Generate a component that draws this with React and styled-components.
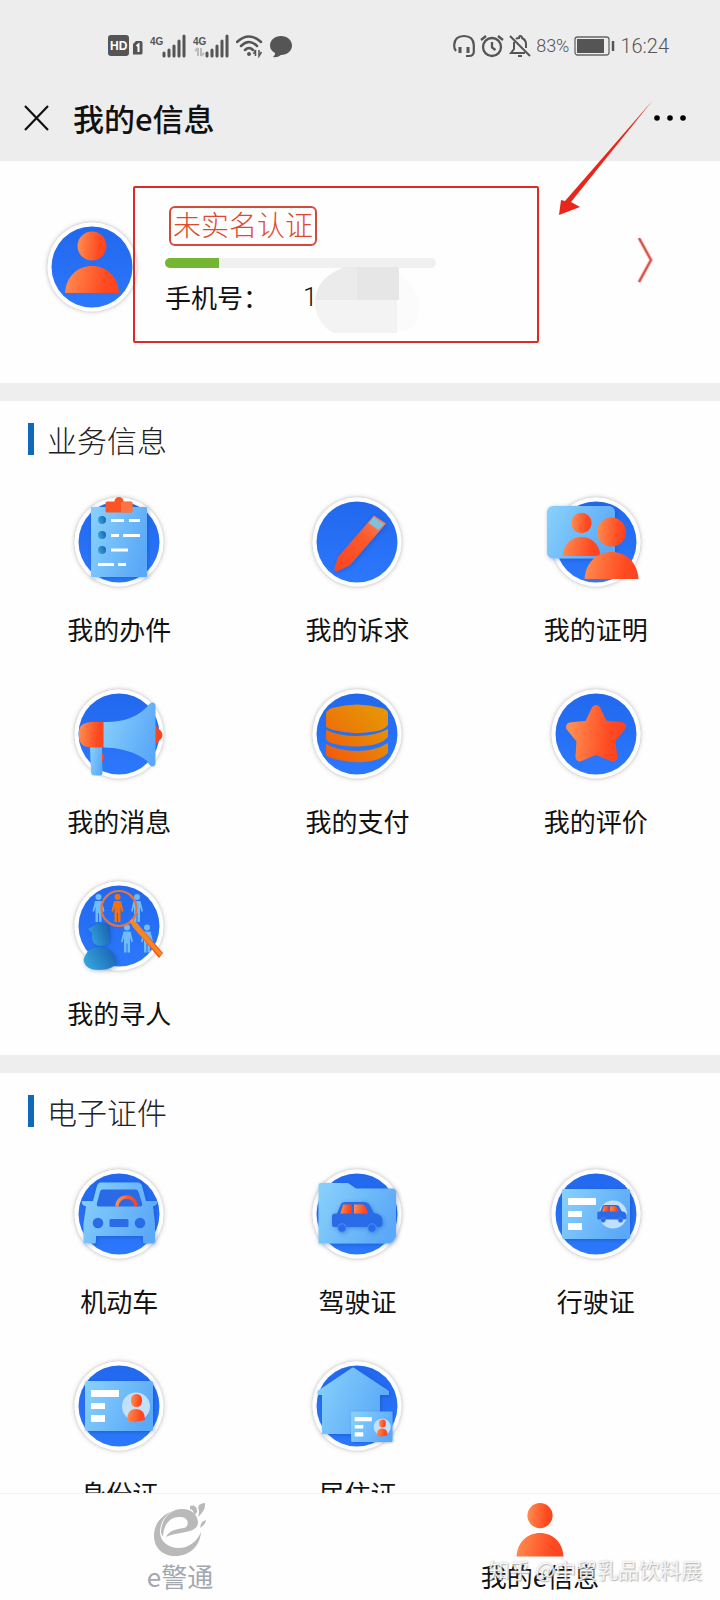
import styled, { createGlobalStyle } from 'styled-components'

const GlobalStyle = createGlobalStyle`
  * {
    box-sizing: border-box;
  }

  body {
    margin: 0;
    background: #fefefe;
    color: #111;
    font-family: "Noto Sans CJK SC", "Noto Sans", sans-serif;
    font-weight: 300;
  }
`

const Page = styled.div`
  position: relative;
  display: flex;
  flex-direction: column;
  height: 100vh;
  overflow: hidden;
`

const StatusBar = styled.div`
  display: flex;
  justify-content: space-between;
  padding: 34px 51px 17px 108px;
  background: #ededed;
  color: #555;
`

const StatusGroup = styled.div`
  display: flex;
  align-items: center;
  gap: ${(props) => props.$gap}px;
  height: 24px;
`

const StatusText = styled.span`
  font-family: "Roboto", sans-serif;
  font-size: ${(props) => props.$size}px;
  line-height: 24px;
`

const Header = styled.header`
  display: flex;
  align-items: center;
  gap: 24px;
  height: 86px;
  padding: 0 33px 0 24px;
  background: #ededed;
`

const IconButton = styled.button`
  display: flex;
  padding: 0;
  border: 0;
  background: none;
  color: inherit;
  cursor: pointer;
`

const Title = styled.h1`
  flex: 1;
  margin: 0;
  font-size: 31px;
  font-weight: 500;
  line-height: 32px;
`

const Content = styled.main`
  flex: 1;
  min-height: 0;
  overflow-y: auto;
  scrollbar-width: none;
`

const Profile = styled.section`
  display: flex;
  align-items: center;
  padding: 25px 60px 40px 44px;
`

const AvatarFrame = styled.div`
  padding-top: 5px;
`

const ProfileBox = styled.div`
  position: relative;
  flex: 0 1 406px;
  margin: 0 auto 0 -7px;
  padding: 18px 101px 26px 30px;
  border: 2px solid #dc2a24;
  border-radius: 2px;
`

const Badge = styled.span`
  display: inline-block;
  margin-left: 4px;
  padding: 0 2px 4px;
  border: 2px solid #d24a38;
  border-radius: 6px;
  color: #dd4a2e;
  font-size: 28px;
  line-height: 32px;
  vertical-align: top;
`

const Track = styled.div`
  height: 10px;
  margin: 12px 0 11px;
  border-radius: 5px;
  background: #f0f0f0;
  overflow: hidden;
`

const Fill = styled.div`
  height: 100%;
  background: #74b531;
`

const PhoneRow = styled.div`
  display: flex;
  gap: 34px;
  font-size: 26px;
  font-weight: 400;
  line-height: 36px;
  white-space: nowrap;
`

const PhoneNumber = styled.span`
  position: relative;
  font-family: "Roboto", "Noto Sans CJK SC", sans-serif;
  font-weight: 300;
`

const Smudge = styled.svg`
  position: absolute;
  left: 10px;
  top: -12px;
`

const Arrow = styled.svg`
  position: absolute;
  right: 64px;
  top: 98px;
  pointer-events: none;
`

const Divider = styled.div`
  height: 18px;
  background: #eee;
`

const Section = styled.section`
  padding: 22px 0 24px;
`

const SectionTitle = styled.h2`
  display: flex;
  align-items: center;
  gap: 13px;
  margin: 0 28px 39px;
  font-size: 30px;
  font-weight: 300;
  line-height: 32px;
  color: #222;

  &::before {
    content: "";
    width: 6px;
    height: 32px;
    background: #0f68b8;
  }
`

const Grid = styled.div`
  display: grid;
  grid-template-columns: repeat(3, 1fr);
  row-gap: 39px;
  padding-right: 5px;
`

const Item = styled.a`
  display: flex;
  flex-direction: column;
  align-items: center;
  gap: 21px;
  color: #111;
  font-size: 26px;
  font-weight: 400;
  line-height: 36px;
  text-decoration: none;
`

const Drawing = styled.svg`
  display: block;
  flex: none;
  overflow: visible;
`

const Nav = styled.nav`
  display: flex;
  border-top: 1px solid #f3f3f3;
  background: #fefefe;
`

const Tab = styled.a`
  flex: 1;
  display: flex;
  flex-direction: column;
  align-items: center;
  gap: 1px;
  padding: 9px 0 6px;
  color: ${(props) => (props.$active ? '#111' : '#a3a8b0')};
  font-size: 26px;
  font-weight: 400;
  line-height: 36px;
  text-decoration: none;
`

const Watermark = styled.div`
  position: absolute;
  right: 18px;
  bottom: 16px;
  color: #fffd;
  font-size: 21px;
  font-weight: 400;
  line-height: 30px;
  text-shadow: 1px 1px 1px #8888, 0 0 2px #9999;
  pointer-events: none;
`

const Defs = styled.svg`
  position: absolute;
`

function Gradients() {
  return (
    <Defs width="0" height="0" aria-hidden="true">
      <defs>
        <linearGradient id="orange" x1="0" y1="0.5" x2="1" y2="0.6">
          <stop offset="0" stopColor="#ff8c50" />
          <stop offset="0.75" stopColor="#ff4a20" />
          <stop offset="1" stopColor="#fb4420" />
        </linearGradient>
        <linearGradient id="flame" x1="0" y1="1" x2="1" y2="0">
          <stop offset="0" stopColor="#fb4420" />
          <stop offset="0.6" stopColor="#fb5a2c" />
          <stop offset="1" stopColor="#f58a60" />
        </linearGradient>
        <linearGradient id="sky" x1="0" y1="0.2" x2="1" y2="0.6">
          <stop offset="0" stopColor="#86cffb" />
          <stop offset="1" stopColor="#5aa8f8" />
        </linearGradient>
        <linearGradient id="blue" x1="0" y1="0" x2="0" y2="1">
          <stop offset="0" stopColor="#2168ee" />
          <stop offset="1" stopColor="#2c78fc" />
        </linearGradient>
        <linearGradient id="gold" x1="0" y1="1" x2="1" y2="0">
          <stop offset="0" stopColor="#f4560c" />
          <stop offset="0.55" stopColor="#e98207" />
          <stop offset="1" stopColor="#e69a05" />
        </linearGradient>
        <linearGradient id="teal" x1="0" y1="0.7" x2="1" y2="0.3">
          <stop offset="0" stopColor="#35a8dc" />
          <stop offset="1" stopColor="#1c62b4" />
        </linearGradient>
        <filter id="soft" x="-30%" y="-30%" width="160%" height="160%">
          <feDropShadow dx="1" dy="1" stdDeviation="2" floodColor="#0a3a90" floodOpacity="0.35" />
        </filter>
        <filter id="halo" x="-30%" y="-30%" width="160%" height="160%">
          <feDropShadow dx="0" dy="0" stdDeviation="2" floodColor="#665c5c" floodOpacity="0.5" />
        </filter>
      </defs>
    </Defs>
  )
}

function Disc({ children }) {
  return (
    <Drawing width="96" height="96" viewBox="0 0 96 96" aria-hidden="true">
      <circle cx="48" cy="48" r="44.500" fill="#fff" filter="url(#halo)" />
      <circle cx="48" cy="48" r="40.500" fill="url(#blue)" />
      {children}
    </Drawing>
  )
}

function Bust() {
  return (
    <g fill="url(#orange)">
      <circle cx="0" cy="-20" r="14.500" />
      <path d="M-27 27C-26 10 -14 0 0 0S26 10 27 27Z" />
    </g>
  )
}

function SideCar() {
  return (
    <g>
      <path
        d="M23 50Q23 47 28 47.500L32 38Q33 36 36 36H55Q58 36 60 38L65 47Q73 48 73.500 54V58Q73.500 61 70 61H25Q23 61 23 58Z"
        fill="#2a6ce8"
      />
      <circle cx="33" cy="62" r="4.200" fill="#2a6ce8" stroke="#4a94f4" strokeWidth="1" />
      <circle cx="63" cy="62" r="4.200" fill="#2a6ce8" stroke="#4a94f4" strokeWidth="1" />
      <path d="M34 38.500H42.500V47.500H31.500Z" fill="url(#orange)" />
      <path d="M45 38.500H53Q57 38.500 59 47.500H45Z" fill="url(#orange)" />
    </g>
  )
}

function CardBase({ children }) {
  return (
    <g>
      <rect x="14" y="23" width="68" height="50" rx="2" fill="url(#sky)" filter="url(#soft)" />
      <path d="M20 32H48V39H20ZM20 45H34V51H20ZM20 57H34V64H20Z" fill="#fff" />
      <circle cx="65" cy="48.500" r="14" fill="#c0e0fc" />
      {children}
    </g>
  )
}

function IdCard() {
  return (
    <CardBase>
      <rect x="60" y="36" width="11" height="13" rx="5.500" fill="url(#orange)" />
      <path d="M56 63Q56 51 65 51T74 62Q65 65 56 63Z" fill="url(#orange)" />
    </CardBase>
  )
}

function Avatar() {
  return (
    <Disc>
      <g transform="translate(48 47)">
        <Bust />
      </g>
    </Disc>
  )
}

function Clipboard() {
  return (
    <Disc>
      <rect x="20" y="13" width="56" height="70" rx="1" fill="url(#sky)" filter="url(#soft)" />
      <path
        d="M36 7.500H43.500A4.500 4.500 0 0 1 52.500 7.500H60Q61.500 7.500 61.500 9V17Q61.500 18.500 60 18.500H36Q34.500 18.500 34.500 17V9Q34.500 7.500 36 7.500Z"
        fill="#fa5424"
      />
      <path d="M50 8H60Q61.500 8 61.500 9V17Q61.500 18.500 60 18.500H50Z" fill="#fb8a55" opacity="0.6" />
      <g fill="url(#teal)">
        <circle cx="31" cy="26" r="4" />
        <circle cx="31" cy="41" r="4" />
        <circle cx="31" cy="56" r="4" />
      </g>
      <path
        d="M40 26.500H53M58 26.500H69M40 41.500H48M52 41.500H69M40 56H57M27 70.500H43M47 70.500H55"
        stroke="#fff"
        strokeWidth="3"
      />
    </Disc>
  )
}

function Pencil() {
  return (
    <Disc>
      <g filter="url(#soft)">
        <path d="M65 21.500L77 29.500L41 71L29 77Q25 78 25.500 74L29 63Z" fill="url(#flame)" />
        <path d="M65 23L75 30.500L69.500 36L59.500 29Z" fill="#7fc0dc" />
      </g>
    </Disc>
  )
}

function Certificate() {
  return (
    <Disc>
      <rect x="-1" y="12" width="68" height="52.500" rx="6" fill="url(#sky)" filter="url(#soft)" />
      <g transform="translate(33.500 43) scale(0.7)">
        <Bust />
      </g>
      <g transform="translate(63.500 58)">
        <Bust />
      </g>
    </Disc>
  )
}

function Megaphone() {
  return (
    <Disc>
      <path d="M29 67H31.500Q34 69 33 73L31 77H29Z" fill="#fb4420" />
      <path d="M19 61H31V69Q31 71 31.500 87Q31.500 89.500 29 89.500H23Q20.500 89.500 20 87Z" fill="url(#sky)" />
      <path d="M84 39L90 45Q93 49 90 53L84 59Z" fill="#fb4420" />
      <path d="M32.500 36V61.500H20Q8 61 8 50V45Q8 37 20 36Z" fill="url(#orange)" />
      <path
        d="M32.500 36Q60 37 76 21Q79 16 82 16.500Q84.500 17 84.500 20V77Q84.500 80 82 80.500Q79 81 76 75Q60 62 32.500 61.500Z"
        fill="url(#sky)"
      />
    </Disc>
  )
}

function Coins() {
  return (
    <Disc>
      <path
        d="M17 27Q18 24 23 22Q48 15 73 22Q79 24 79 27V39Q75 45 61 46Q44 49 24 44Q17 42 17 40ZM17 44Q30 50 48 50T79 43V51Q72 59 56 60Q38 62 22 57Q17 55 17 52ZM17 58Q30 65 48 65T79 57V67Q73 74 56 76Q38 77 22 72Q17 70 17 68Z"
        fill="url(#gold)"
      />
    </Disc>
  )
}

function Star() {
  return (
    <Disc>
      <path
        d="M48 23.500L55.500 39L73.500 40.500L62.500 54L65 71L48 64L32 71L33 54L22.500 41L40.500 39Z"
        fill="url(#orange)"
        stroke="url(#orange)"
        strokeWidth="9"
        strokeLinejoin="round"
      />
    </Disc>
  )
}

function Figure({ x, y, color }) {
  return (
    <g transform={`translate(${x} ${y})`} fill={color}>
      <circle cx="0" cy="0" r="3" />
      <path d="M-3.500 4H3.500L6 14L4.500 15L3 10V25H0.500V16H-0.500V25H-3V10L-4.500 15L-6 14Z" />
    </g>
  )
}

function Search() {
  return (
    <Disc>
      <Figure x="27.500" y="19" color="#6fbcf8" />
      <Figure x="66" y="19" color="#6fbcf8" />
      <Figure x="56" y="49.500" color="#6fbcf8" />
      <Figure x="76" y="49.500" color="#6fbcf8" />
      <Figure x="46.500" y="19" color="#f8700c" />
      <circle cx="48" cy="30.500" r="17.500" fill="none" stroke="#e8733c" strokeWidth="2.200" />
      <path d="M59 43L61 41L66 45L92 75L88 80L62 49Z" fill="url(#orange)" />
      <path d="M61 44L90 77" stroke="#f48a1c" strokeWidth="4" />
      <g fill="url(#teal)" filter="url(#soft)">
        <path d="M17 51L27 45Q38 44 39 50V60Q38 68 30 68T21 60V55Z" />
        <path d="M12.500 82Q16 69 29 69T46 84Q42 92 28 92T12.500 82Z" />
      </g>
    </Disc>
  )
}

function Car() {
  return (
    <Disc>
      <path
        d="M30 16.500H66Q70 16.500 71 20L75 35H86Q87 39 82 40.500L84 58V76Q84 77.500 82 77.500H74Q72 77.500 72 75V70H25V75Q25 77.500 23 77.500H12.500V58L15 40.500Q10 39 11 35H22L26 20Q27 16.500 30 16.500Z"
        fill="url(#sky)"
        filter="url(#soft)"
      />
      <path d="M31 23.500H65Q67 23.500 67.500 26L71 37Q72 40.500 69 40.500H28Q25 40.500 26 37L29 26Q29.500 23.500 31 23.500Z" fill="#2a6ae6" />
      <path d="M46 40.500A9.500 9.500 0 0 1 65 40.500" fill="none" stroke="url(#orange)" strokeWidth="3.500" />
      <circle cx="27" cy="57" r="5.300" fill="#2a6ce8" />
      <circle cx="69" cy="57" r="5.300" fill="#2a6ce8" />
      <rect x="38.500" y="53" width="19" height="8" rx="1.500" fill="#2a6ce8" />
    </Disc>
  )
}

function Folder() {
  return (
    <Disc>
      <path
        d="M12 17H39L47 22.500H84Q87 23 87 26V70Q86 74 81 77.500H9.500V20Q9.500 17 12 17Z"
        fill="url(#sky)"
        filter="url(#soft)"
      />
      <g filter="url(#soft)">
        <SideCar />
      </g>
    </Disc>
  )
}

function VehicleCard() {
  return (
    <Disc>
      <CardBase>
        <g transform="translate(36 18) scale(0.58)">
          <SideCar />
        </g>
      </CardBase>
    </Disc>
  )
}

function PersonCard() {
  return (
    <Disc>
      <IdCard />
    </Disc>
  )
}

function House() {
  return (
    <Disc>
      <path
        d="M42 10.500Q44 8.500 46 10.500L80 33V37H71V76H13V37H8.500V33Z"
        fill="url(#sky)"
        filter="url(#soft)"
      />
      <g transform="translate(33.500 39.500) scale(0.61)">
        <IdCard />
      </g>
    </Disc>
  )
}

function Signal({ muted }) {
  return (
    <svg width="37" height="24" viewBox="0 0 37 24" aria-hidden="true">
      <text x="0" y="11" fontFamily="Liberation Sans, sans-serif" fontSize="10" fontWeight="700" fill="#555">
        4G
      </text>
      {muted && <path d="M5 14V22M2 17L5 14M8 14V22M11 19L8 22" stroke="#bbb" strokeWidth="2" />}
      <path d="M14 19V22M19 16V22M24 12V22M29 7V22M34 2V22" stroke="#555" strokeWidth="3" strokeLinecap="round" />
    </svg>
  )
}

function LeftStatus() {
  return (
    <StatusGroup $gap={6}>
      <svg width="36" height="24" viewBox="0 0 36 24" aria-hidden="true">
        <rect x="0" y="1" width="21" height="21" rx="3" fill="#555" />
        <text x="2" y="16" fontFamily="Liberation Sans, sans-serif" fontSize="12" fontWeight="700" fill="#fff">
          HD
        </text>
        <path d="M25 10L28 7H33Q34.500 7 34.500 9V19Q34.500 20.500 33 20.500H25Z" fill="#555" />
        <path d="M28.500 12L30.500 10.500V18" stroke="#fff" strokeWidth="2" fill="none" />
      </svg>
      <Signal />
      <Signal muted />
      <svg width="27" height="24" viewBox="0 0 27 24" fill="none" stroke="#555" strokeWidth="2.500" aria-hidden="true">
        <path d="M1 8Q13 -3 25 8M5 12Q13 4 21 12M9 16Q13 12 17 16" strokeLinecap="round" />
        <circle cx="13" cy="20" r="2" fill="#555" stroke="none" />
        <path d="M19.500 22V16L17.500 20M23 16V22L25.500 18" strokeWidth="1.500" />
      </svg>
      <svg width="24" height="24" viewBox="0 0 24 24" aria-hidden="true">
        <path d="M12 2C18 2 23 6 23 11.500S18 21 12 21Q8 24 4 23Q6.500 21.500 6 19Q1 16 1 11.500C1 6 6 2 12 2Z" fill="#555" />
      </svg>
    </StatusGroup>
  )
}

function RightStatus() {
  return (
    <StatusGroup $gap={5}>
      <svg width="22" height="24" viewBox="0 0 22 24" fill="none" stroke="#555" strokeWidth="2.200" aria-hidden="true">
        <path d="M3 17Q1 15 1.200 11C1.500 5 5.500 2 11 2S20.500 5 20.800 11V18Q20.500 22 16 22H13" />
        <path d="M7 13V19M15 13V19" strokeWidth="3" />
      </svg>
      <svg width="24" height="24" viewBox="0 0 24 24" fill="none" stroke="#555" strokeWidth="2.300" aria-hidden="true">
        <circle cx="12" cy="13" r="9" />
        <path d="M12 8V13.500L15.500 16M1 6L6 2M23 6L18 2" />
      </svg>
      <svg width="22" height="24" viewBox="0 0 22 24" fill="none" stroke="#555" strokeWidth="2" aria-hidden="true">
        <path d="M1 2L21 22M5 8V15L2 19H16M7 5Q8 4 10 4Q10 1.500 11.500 2T13 4Q17 6 17 10V14M9 22H13" />
      </svg>
      <StatusText $size={18}>83%</StatusText>
      <svg width="41" height="24" viewBox="0 0 41 24" aria-hidden="true">
        <rect x="1" y="3" width="34" height="18" rx="2.500" fill="none" stroke="#666" strokeWidth="1.300" />
        <rect x="3" y="5" width="27" height="14" fill="#555" />
        <path d="M39 7V17" stroke="#555" strokeWidth="2.500" />
      </svg>
      <StatusText $size={20}>16:24</StatusText>
    </StatusGroup>
  )
}

function ELogo() {
  return (
    <Drawing width="52" height="54" viewBox="0 0 52 54" fill="#b9b9b9" aria-hidden="true">
      <path d="M19 8C5 13 0 23 0 33C0 45 9 53 21 53C36 53 46 43 47 29C43 39 34 45 25 45C13 45 5 37 6 27C7 19 11 12 19 8Z" />
      <path
        fillRule="evenodd"
        d="M7 28C8 14 18 6 28 6C38 6 44 12 44 20C43 31 24 28 12 34C14 29 20 26 30 25C35 24 36 15 27 14C17 13 10 20 9 33Q7 32 7 28Z"
      />
      <path d="M36 3Q42 1 43 7Q44 10 40 12Q40 7 36 6ZM45 2Q48 0 51 0Q52 7 44 14Q46 7 44 5ZM47 21Q48 18 52 17Q52 21 46 25Z" />
    </Drawing>
  )
}

const services = [
  { label: '我的办件', Icon: Clipboard },
  { label: '我的诉求', Icon: Pencil },
  { label: '我的证明', Icon: Certificate },
  { label: '我的消息', Icon: Megaphone },
  { label: '我的支付', Icon: Coins },
  { label: '我的评价', Icon: Star },
  { label: '我的寻人', Icon: Search },
]

const documents = [
  { label: '机动车', Icon: Car },
  { label: '驾驶证', Icon: Folder },
  { label: '行驶证', Icon: VehicleCard },
  { label: '身份证', Icon: PersonCard },
  { label: '居住证', Icon: House },
]

function IconSection({ title, items }) {
  return (
    <Section>
      <SectionTitle>{title}</SectionTitle>
      <Grid>
        {items.map(({ label, Icon }) => (
          <Item key={label} href="#">
            <Icon />
            {label}
          </Item>
        ))}
      </Grid>
    </Section>
  )
}

function App() {
  const progress = 20

  return (
    <Page>
      <GlobalStyle />
      <Gradients />
      <StatusBar>
        <LeftStatus />
        <RightStatus />
      </StatusBar>
      <Header>
        <IconButton type="button" aria-label="关闭">
          <svg width="25" height="26" viewBox="0 0 25 26" aria-hidden="true">
            <path d="M1 1L24 25M24 1L1 25" stroke="#111" strokeWidth="2.200" />
          </svg>
        </IconButton>
        <Title>我的e信息</Title>
        <IconButton type="button" aria-label="更多">
          <svg width="34" height="24" viewBox="0 0 34 24" aria-hidden="true">
            <circle cx="4" cy="12" r="2.800" />
            <circle cx="17" cy="12" r="2.800" />
            <circle cx="30" cy="12" r="2.800" />
          </svg>
        </IconButton>
      </Header>
      <Content>
        <Profile>
          <AvatarFrame>
            <Avatar />
          </AvatarFrame>
          <ProfileBox>
            <Badge>未实名认证</Badge>
            <Track role="progressbar" aria-label="认证进度" aria-valuenow={progress}>
              <Fill style={{ width: `${progress}%` }} />
            </Track>
            <PhoneRow>
              <span>手机号：</span>
              <PhoneNumber>
                1
                <Smudge width="110" height="66" viewBox="0 0 110 66" aria-hidden="true">
                  <path d="M86 8Q106 20 106 40T90 64H80V8Z" fill="#fbfbfb" />
                  <path d="M32 0H84V66H20Q6 58 2 40Q2 14 32 0Z" fill="#f3f3f3" />
                  <path d="M32 0H82Q86 0 86 3V33H2Q4 10 32 0Z" fill="#ebebeb" />
                  <path d="M44 0H82Q86 0 86 3V33H44Z" fill="#e6e6e6" />
                </Smudge>
              </PhoneNumber>
            </PhoneRow>
          </ProfileBox>
          <IconButton type="button" aria-label="个人资料">
            <svg width="30" height="54" viewBox="0 0 30 54" aria-hidden="true">
              <path d="M9 0L21 22L9 44" fill="none" stroke="#f8c4bc" strokeWidth="4" />
              <path d="M9 0L21 22L9 44" fill="none" stroke="#d2544c" strokeWidth="2" />
            </svg>
          </IconButton>
        </Profile>
        <Divider />
        <IconSection title="业务信息" items={services} />
        <Divider />
        <IconSection title="电子证件" items={documents} />
      </Content>
      <Nav>
        <Tab href="#">
          <ELogo />
          e警通
        </Tab>
        <Tab href="#" $active>
          <Drawing width="54" height="54" viewBox="-27 -27 54 54" aria-hidden="true">
            <g transform="translate(0 3) scale(0.87)">
              <Bust />
            </g>
          </Drawing>
          我的e信息
        </Tab>
      </Nav>
      <Arrow width="100" height="120" viewBox="0 0 100 120" aria-hidden="true">
        <path d="M97 2L15 104L24 109L3 117L5 102L9 103Z" fill="#e8261c" />
      </Arrow>
      <Watermark>知乎 @中贸乳品饮料展</Watermark>
    </Page>
  )
}

export default App
